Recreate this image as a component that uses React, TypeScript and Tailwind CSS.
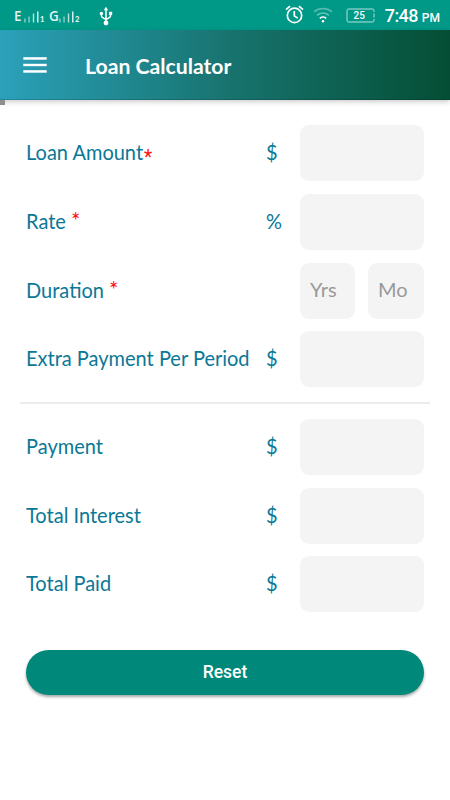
import type { ReactNode } from "react";

type Row = { label: string; unit: string; star?: "tight" | "spaced" };

const inputs: Row[] = [
  { label: "Loan Amount", unit: "$", star: "tight" },
  { label: "Rate", unit: "%", star: "spaced" },
];

const results: Row[] = [
  { label: "Payment", unit: "$" },
  { label: "Total Interest", unit: "$" },
  { label: "Total Paid", unit: "$" },
];

function SignalBars() {
  return (
    <svg width="15" height="12" viewBox="0 0 15 12" fill="#e3f4f2">
      <rect x="0.3" y="7.5" width="1.3" height="4" opacity="0.65" />
      <rect x="4.4" y="5.5" width="1.3" height="6" opacity="0.65" />
      <rect x="8.8" y="2.5" width="1.4" height="9" opacity="0.8" />
      <rect x="13" y="0.5" width="1.5" height="11" opacity="0.95" />
    </svg>
  );
}

function Carrier({ name, slot }: { name: string; slot: string }) {
  return (
    <span className="flex items-end">
      <span className="w-[10px] font-['Open_Sans',sans-serif] text-[13.5px] leading-[14px] font-semibold">
        {name}
      </span>
      <SignalBars />
      <span className="ml-px w-[4px] text-[7.5px] leading-[6px] font-black">{slot}</span>
    </span>
  );
}

function UsbIcon() {
  return (
    <svg width="14" height="20" viewBox="0 0 14 20" fill="none" stroke="#fff" strokeWidth="1.5">
      <path d="M7 3v14M2.4 7v2.4c0 1.2 1 2.2 2.2 2.8L7 13.3M11.6 7v2.4c0 1.2-1 2.2-2.2 2.8L7 13.3" />
      <path d="M7 .8 9.2 4.2H4.8Z" fill="#fff" stroke="none" />
      <circle cx="2.4" cy="7.4" r="1.7" fill="#fff" stroke="none" />
      <path d="M10 5.8h3.2V9H10Z" fill="#fff" stroke="none" />
      <circle cx="7" cy="17" r="2.4" fill="#fff" stroke="none" />
    </svg>
  );
}

function AlarmIcon() {
  return (
    <svg width="19" height="19" viewBox="0 0 19 19" fill="none" stroke="#fff" strokeWidth="1.7">
      <circle cx="9.5" cy="10.4" r="7.2" />
      <path d="M1 4.6 5 1.2M18 4.6 14 1.2M9.3 6v4.9l3.4 2.2" />
    </svg>
  );
}

function WifiIcon() {
  return (
    <svg width="20" height="16" viewBox="0 0 20 16" fill="none" stroke="#fff" strokeWidth="1.6">
      <path d="M1 4.8c5.2-4.2 12.8-4.2 18 0" opacity="0.32" />
      <path d="M4 8.3c3.6-3 8.4-3 12 0" opacity="0.4" />
      <path d="M6.800 11.300c2-1.600 4.400-1.600 6.400 0" opacity="0.95" />
      <circle cx="10" cy="14.2" r="1.2" fill="#fff" stroke="none" />
    </svg>
  );
}

function BatteryIcon() {
  return (
    <span className="relative flex h-[15px] w-[29px] items-center justify-center font-[Roboto,sans-serif] text-[10px] font-medium">
      <svg className="absolute inset-0" width="29" height="15" viewBox="0 0 29 15" fill="none" stroke="#b5e0dc">
        <path d="M28 4V2.5A1.5 1.5 0 0 0 26.5 1H2.5A1.5 1.5 0 0 0 1 2.5v10A1.5 1.5 0 0 0 2.5 14h24a1.5 1.5 0 0 0 1.5-1.5V11M28 5.5v4" />
      </svg>
      <span className="relative -left-px">25</span>
    </span>
  );
}

function StatusBar() {
  return (
    <div className="flex h-[30px] items-center bg-[#009887] text-white">
      <div className="flex items-center pt-px pl-[14px] text-[#e3f4f2]">
        <Carrier name="E" slot="1" />
        <span className="w-[5px]" />
        <Carrier name="G" slot="2" />
      </div>
      <div className="ml-[20px] pt-px">
        <UsbIcon />
      </div>
      <div className="ml-auto flex items-center pr-[10px]">
        <span className="pb-px">
          <AlarmIcon />
        </span>
        <span className="ml-[9px]">
          <WifiIcon />
        </span>
        <span className="ml-[13px]">
          <BatteryIcon />
        </span>
        <span className="ml-[10px] flex items-baseline pt-[2px] font-[Roboto,sans-serif] font-medium">
          <span className="text-[18px] leading-5 tracking-[-0.6px]">7:48</span>
          <span className="ml-[4px] text-[12px]">PM</span>
        </span>
      </div>
    </div>
  );
}

function Header() {
  return (
    <header className="flex h-[70px] items-center border-b border-black/15 bg-gradient-to-r from-[#2ba1ba] via-[#187470] to-[#054e35] pl-[23px] shadow-[0_2px_5px_rgba(0,0,0,0.2)]">
      <button aria-label="Menu" className="pt-px">
        <svg width="24" height="16" viewBox="0 0 24 16" fill="#fff">
          <rect x="0.3" y="0.2" width="23.4" height="2.5" />
          <rect x="0.3" y="6.8" width="23.4" height="2.4" />
          <rect x="0.3" y="13.2" width="23.4" height="2.5" />
        </svg>
      </button>
      <h1 className="ml-[38px] pt-[2px] text-[21.2px] leading-7 font-bold text-white">Loan Calculator</h1>
    </header>
  );
}

function FormRow({ label, unit, star, children }: Row & { children?: ReactNode }) {
  return (
    <div className="flex h-[56px] items-center text-[20px] text-[#0b7896]">
      <label className="w-[240px] origin-center scale-y-[1.06] pb-[2px] whitespace-nowrap">
        {label}
        {star === "tight" && (
          <span className="relative top-[3px] left-px font-[Roboto,sans-serif] text-[19px] leading-none text-[#ff1010]">*</span>
        )}
        {star === "spaced" && (
          <span className="relative ml-[5px] text-[22px] leading-none text-[#ff1010]">*</span>
        )}
      </label>
      <span className="w-[34px] scale-y-[1.06] pb-[2px]">{unit}</span>
      {children ?? <input aria-label={label} className="h-full w-[124px] rounded-[9px] bg-[#f4f4f4] px-[10px] outline-none" />}
    </div>
  );
}

export default function App() {
  return (
    <div className="h-[800px] w-[450px] overflow-hidden bg-white font-[Lato,sans-serif]">
      <StatusBar />
      <Header />
      <span className="block h-[5px] w-[5px] bg-[#8f8f8f]" />
      <main className="px-[26px] pt-[20px]">
        <div className="flex flex-col gap-[12.8px]">
          {inputs.map((row) => (
            <FormRow key={row.label} {...row} />
          ))}
          <FormRow label="Duration" unit="" star="spaced">
            <input placeholder="Yrs" className="h-full w-[55px] rounded-[9px] bg-[#f4f4f4] pl-[10px] pb-[3px] outline-none placeholder:text-[#999]" />
            <input placeholder="Mo" className="ml-[12.5px] h-full w-[56.5px] rounded-[9px] bg-[#f4f4f4] pl-[10.5px] pb-[3px] outline-none placeholder:text-[#999]" />
          </FormRow>
          <FormRow label="Extra Payment Per Period" unit="$" />
        </div>
        <hr className="-mx-[6px] mt-[15px] mb-[14.5px] h-[2px] border-0 bg-[#ececec]" />
        <div className="flex flex-col gap-[12.8px]">
          {results.map((row) => (
            <FormRow key={row.label} {...row} />
          ))}
        </div>
        <button className="mt-[37.5px] block h-[45px] w-[398px] rounded-full bg-[#00897b] pb-px font-[Roboto,sans-serif] text-[17.5px] font-medium text-white shadow-[0_2px_3px_rgba(0,0,0,0.35)]">
          Reset
        </button>
      </main>
    </div>
  );
}
